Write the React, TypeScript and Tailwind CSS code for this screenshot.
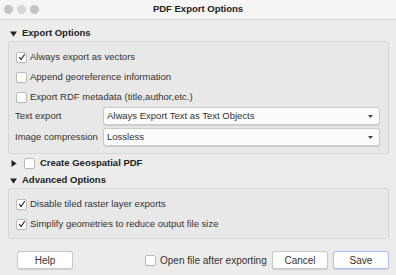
import React from "react"

function Check({ checked, size = 11 }: { checked?: boolean; size?: number }) {
	return (
		<span
			className="flex shrink-0 items-center justify-center rounded-[2px] border border-[#bcbcbc] bg-white shadow-[0_0.5px_0.5px_rgba(0,0,0,0.08)]"
			style={{ width: size, height: size }}
		>
			{checked && (
				<svg width="8" height="8" viewBox="0 0 8 8">
					<path d="M1.2 4.2 L3.1 6.6 L6.8 1" fill="none" stroke="#222" strokeWidth="1.1" />
				</svg>
			)}
		</span>
	)
}

function Tri({ open }: { open?: boolean }) {
	return open ? (
		<svg width="7" height="6" viewBox="0 0 7 6">
			<path d="M0 0.5 L7 0.5 L3.5 5.5 Z" fill="#222" />
		</svg>
	) : (
		<svg width="6" height="7" viewBox="0 0 6 7">
			<path d="M0.5 0 L5.5 3.5 L0.5 7 Z" fill="#222" />
		</svg>
	)
}

function CheckRow({ label, checked }: { label: string; checked?: boolean }) {
	return (
		<div className="flex h-[20px] items-center gap-[3px] pl-[7px]">
			<Check checked={checked} />
			<span>{label}</span>
		</div>
	)
}

function Combo({ label, value }: { label: string; value: string }) {
	return (
		<div className="flex h-[18px] items-center pl-[6px] pr-[8px]">
			<span className="w-[88px] shrink-0">{label}</span>
			<div className="flex h-[18px] flex-1 items-center justify-between rounded-[3px] border border-[#cbcbcb] bg-[#fbfbfb] pl-[3px] pr-[6px] shadow-[0_0.5px_1px_rgba(0,0,0,0.12)]">
				<span>{value}</span>
				<svg width="5" height="3" viewBox="0 0 5 3">
					<path d="M0 0 L5 0 L2.5 3 Z" fill="#444" />
				</svg>
			</div>
		</div>
	)
}

function Button({ label, primary }: { label: string; primary?: boolean }) {
	return (
		<div
			className={
				primary
					? "flex h-[18px] w-[56px] items-center justify-center rounded-[3px] border border-[#a3c4ec] bg-white text-[10px] shadow-[0_0.5px_1px_rgba(0,0,0,0.12)]"
					: "flex h-[18px] w-[56px] items-center justify-center rounded-[3px] border border-[#c8c8c8] bg-white text-[10px] shadow-[0_0.5px_1px_rgba(0,0,0,0.12)]"
			}
		>
			{label}
		</div>
	)
}

export default function App() {
	return (
		<div className="flex h-[275px] w-[396px] flex-col overflow-hidden bg-[#ececec] font-['Liberation_Sans',Arial,sans-serif] text-[9.5px] text-[#333]">
			<div className="grid h-[20px] shrink-0 grid-cols-[1fr_auto_1fr] items-center border-b border-[#d6d6d6] bg-[#f5f5f5]">
				<div className="flex gap-[4px] pl-[4px]">
					<span className="h-[9px] w-[9px] rounded-full bg-[#c4c4c4]" />
					<span className="h-[9px] w-[9px] rounded-full bg-[#d6d6d6]" />
					<span className="h-[9px] w-[9px] rounded-full bg-[#c4c4c4]" />
				</div>
				<div className="text-[9.5px] font-bold text-[#222]">PDF Export Options</div>
				<div />
			</div>

			<div className="flex flex-col pl-[8px] pr-[7px]">
				<div className="mt-[6px] flex h-[15px] items-center gap-[5px] pl-[2px] font-bold text-[#222]">
					<Tri open />
					<span>Export Options</span>
				</div>
				<div className="flex flex-col rounded-[2px] border border-[#d6d6d6] bg-[#e8e8e8] pb-[7px] pt-[5px]">
					<CheckRow label="Always export as vectors" checked />
					<CheckRow label="Append georeference information" />
					<CheckRow label="Export RDF metadata (title,author,etc.)" />
					<Combo label="Text export" value="Always Export Text as Text Objects" />
					<div className="h-[3px]" />
					<Combo label="Image compression" value="Lossless" />
				</div>

				<div className="flex h-[19px] items-center pl-[3px] font-bold text-[#222]">
					<Tri />
					<span className="ml-[7px]">
						<Check size={11} />
					</span>
					<span className="ml-[5px]">Create Geospatial PDF</span>
				</div>
				<div className="flex h-[15px] items-center gap-[5px] pl-[2px] font-bold text-[#222]">
					<Tri open />
					<span>Advanced Options</span>
				</div>
				<div className="flex flex-col rounded-[2px] border border-[#d6d6d6] bg-[#e8e8e8] pb-[4px] pt-[5px]">
					<CheckRow label="Disable tiled raster layer exports" checked />
					<CheckRow label="Simplify geometries to reduce output file size" checked />
				</div>

				<div className="mt-[12px] flex items-center pl-[9px]">
					<Button label="Help" />
					<div className="ml-[72px] flex items-center gap-[4px]">
						<Check size={11} />
						<span className="text-[10px]">Open file after exporting</span>
					</div>
					<div className="ml-auto flex gap-[5px]">
						<Button label="Cancel" />
						<Button label="Save" primary />
					</div>
				</div>
			</div>
		</div>
	)
}
